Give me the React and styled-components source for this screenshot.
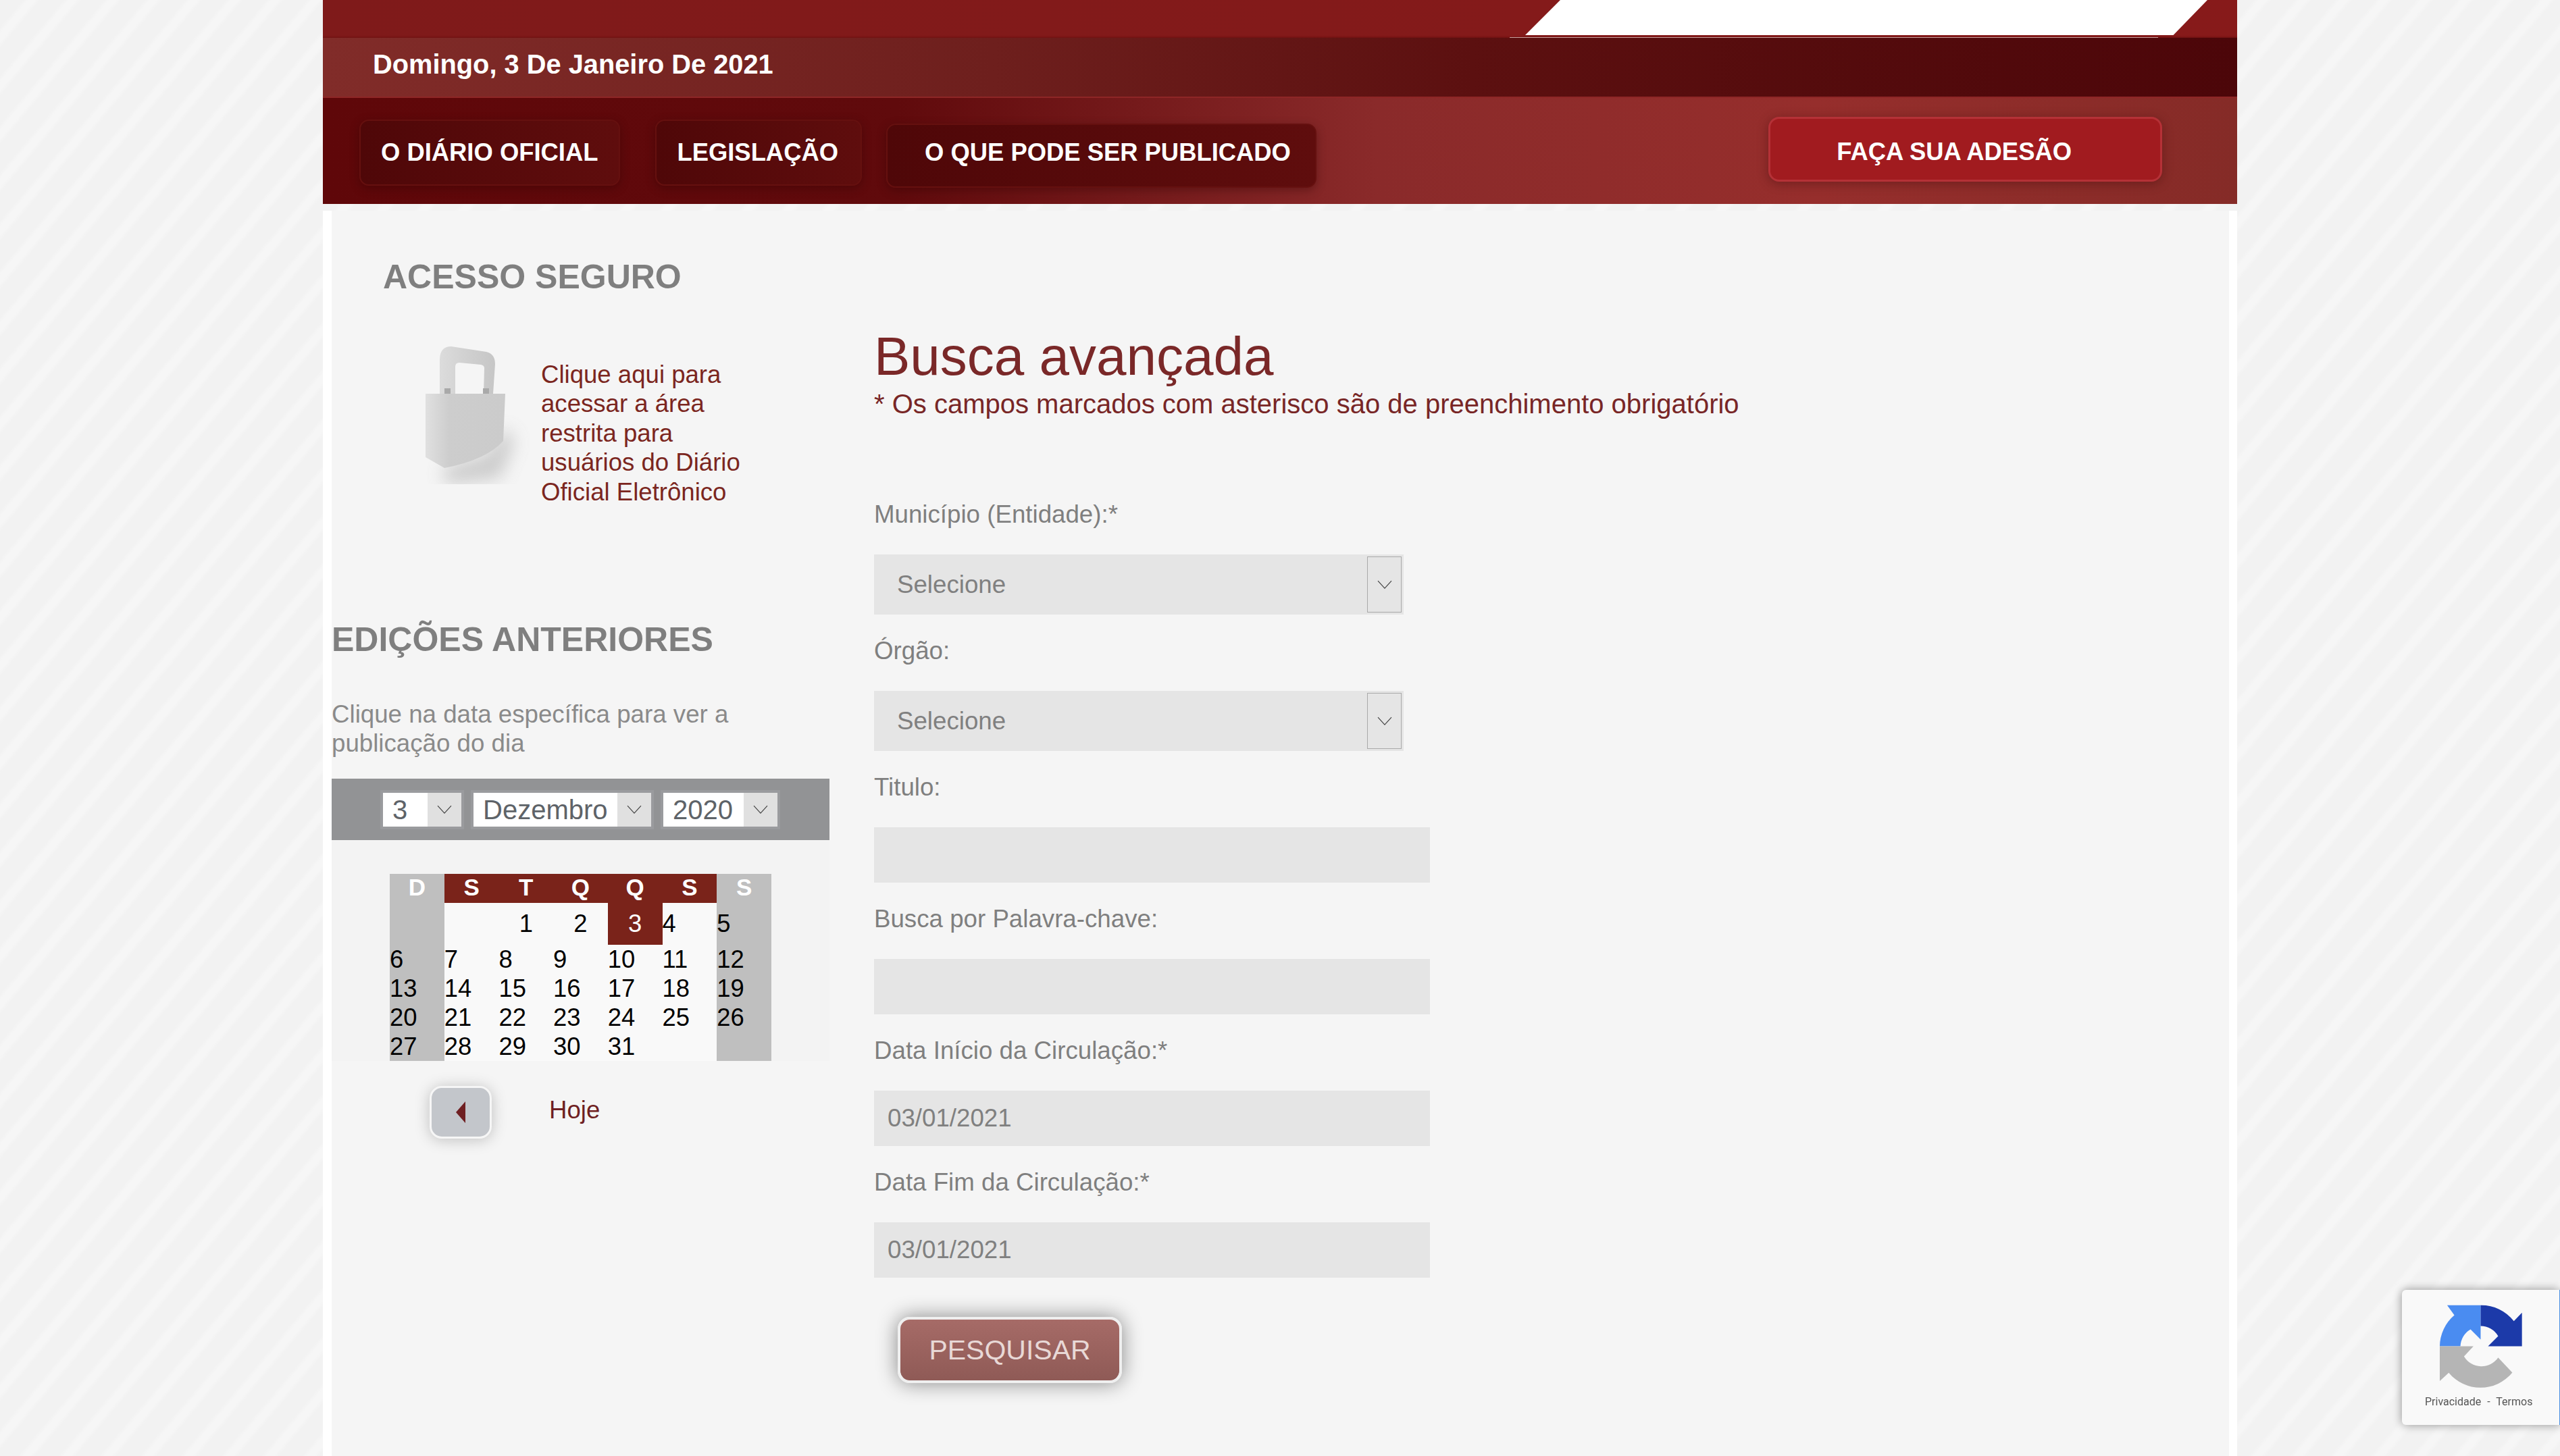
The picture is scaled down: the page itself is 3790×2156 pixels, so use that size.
import React from 'react'
import styled, { createGlobalStyle } from 'styled-components'

const FONT = '"Liberation Sans", Arial, sans-serif'

const WEEKS = [
  ['', '', 1, 2, 3, 4, 5],
  [6, 7, 8, 9, 10, 11, 12],
  [13, 14, 15, 16, 17, 18, 19],
  [20, 21, 22, 23, 24, 25, 26],
  [27, 28, 29, 30, 31, '', ''],
]
const WEEK_DAYS = ['D', 'S', 'T', 'Q', 'Q', 'S', 'S']

const GlobalStyle = createGlobalStyle`
  html, body {
    margin: 0;
    height: 2156px;
    overflow: hidden;
  }

  body {
    font-family: ${FONT};
    background-color: #f2f2f2;
    background-image: repeating-linear-gradient(
      130deg,
      #f2f2f2 0,
      #f2f2f2 26px,
      #f6f6f6 32px,
      #f6f6f6 40px,
      #f2f2f2 46px
    );
  }
`

const Page = styled.div`
  width: 2834px;
  height: 2156px;
  margin: 0 auto;
  display: flex;
  flex-direction: column;
`

const TopBar = styled.div`
  height: 56px;
  display: flex;
  flex-direction: column;
  align-items: flex-end;
  background: linear-gradient(90deg, #7f1a1a, #871a1a);
  box-shadow: inset 0 -3px 3px -2px #6b1010;
`

const LogoSlot = styled.div`
  width: 1010px;
  height: 52px;
  margin-right: 44px;
  background: #fff;
  clip-path: polygon(52px 0, 100% 0, 95% 100%, 0 100%);
`

const LogoRule = styled.div`
  width: 960px;
  height: 1px;
  margin: 3px 117px 0 0;
  background: #c9a3a0;
`

const DateBar = styled.div`
  height: 87px;
  display: flex;
  align-items: center;
  box-sizing: border-box;
  padding: 0 0 8px 74px;
  color: #fff;
  font-size: 39.8px;
  font-weight: 700;
  background: linear-gradient(90deg, #812c29 0%, #6e1f1d 35%, #5c1010 60%, #4c0609 100%);
`

const NavBar = styled.nav`
  height: 159px;
  display: flex;
  align-items: flex-start;
  padding-left: 54px;
  box-sizing: border-box;
  border-top: 2px solid #8e2626;
  background: linear-gradient(90deg, #5f0709 0%, #600a0c 30%, #8a2a2a 55%, #962e2c 78%, #852b27 100%);
`

const NavButton = styled.a`
  height: ${(p) => p.$height}px;
  margin-top: ${(p) => p.$top}px;
  margin-left: ${(p) => p.$gap}px;
  padding: 0 ${(p) => p.$right}px ${(p) => p.$bottom || 0}px ${(p) => p.$left}px;
  display: flex;
  align-items: center;
  box-sizing: border-box;
  border-radius: 14px;
  color: #fff;
  font-size: 36.4px;
  font-weight: 700;
  white-space: nowrap;
  background: linear-gradient(90deg, #4f0708, #5f0d0d);
  border: 2px solid #65100f;
  box-shadow: 0 4px 14px rgba(40, 0, 0, 0.35);
`

const JoinButton = styled.a`
  height: 96px;
  margin: 28px 111px 0 auto;
  padding: 8px 131px 0 98px;
  display: flex;
  align-items: center;
  box-sizing: border-box;
  border-radius: 16px;
  color: #fff;
  font-size: 36.4px;
  font-weight: 700;
  background: #a11b1f;
  border: 3px solid #b53137;
  box-shadow: 0 3px 16px rgba(60, 10, 10, 0.4);
`

const Panel = styled.main`
  flex: 1;
  margin-top: 10px;
  display: flex;
  background: #f5f5f5;
  border-left: 13px solid #fff;
  border-right: 12px solid #fff;
`

const Sidebar = styled.aside`
  width: 737px;
  flex-shrink: 0;
`

const SideTitle = styled.h2`
  margin: ${(p) => p.$top}px 0 0 ${(p) => p.$left}px;
  color: #7f7f7f;
  font-size: 50px;
  font-weight: 700;
  line-height: 60px;
`

const SecureBox = styled.div`
  display: flex;
  margin: 63px 0 0 79px;
`

const LockArt = styled.svg`
  width: 231px;
  height: 214px;
  flex-shrink: 0;
`

const SecureText = styled.a`
  width: 320px;
  margin-top: 30px;
  color: #7b2620;
  font-size: 36.6px;
  line-height: 43.4px;
`

const SideText = styled.p`
  width: 640px;
  margin: 59px 0 31px;
  color: #8a8a8a;
  font-size: 36.7px;
  line-height: 43px;
`

const MonthBar = styled.div`
  height: 91px;
  display: flex;
  align-items: center;
  gap: 10px;
  padding-left: 72px;
  background: #929395;
`

const MiniSelect = styled.div`
  width: ${(p) => p.$width}px;
  height: 58px;
  display: flex;
  box-sizing: border-box;
  border: 4px solid #9a9b9e;
  background: #fff;
  color: #5e6368;
  font-size: 40px;
  line-height: 50px;
`

const MiniValue = styled.span`
  flex: 1;
  padding-left: 14px;
`

const MiniArrow = styled.span`
  width: 50px;
  display: flex;
  align-items: center;
  justify-content: center;
  background: #e0e0e0;
  border-left: 1px solid #fff;
`

const CalendarBox = styled.div`
  padding: 50px 0 0 86px;
  background: #f3f3f3;
`

const Calendar = styled.table`
  width: 565px;
  table-layout: fixed;
  border-collapse: collapse;
  font-size: 36.4px;
`

const HeadCell = styled.th`
  height: 43px;
  padding: 0 0 4px;
  box-sizing: border-box;
  color: #fff;
  font-size: 35px;
  font-weight: 700;
  line-height: 36px;
  background: ${(p) => (p.$weekend ? '#bfbfbf' : '#7a231a')};
`

const DayCell = styled.td`
  height: ${(p) => (p.$first ? 62 : 43)}px;
  padding: 0;
  line-height: 36px;
  text-align: ${(p) => (p.$center ? 'center' : 'left')};
  color: ${(p) => (p.$selected ? '#fff' : '#000')};
  background: ${(p) => (p.$selected ? '#7a231a' : p.$weekend ? '#bfbfbf' : '#f9f9f9')};
`

const CalendarNav = styled.div`
  display: flex;
  align-items: center;
  margin: 37px 0 0 145px;
  gap: 85px;
`

const BackButton = styled.button`
  width: 92px;
  height: 78px;
  padding: 0;
  display: flex;
  align-items: center;
  justify-content: center;
  box-sizing: border-box;
  border-radius: 18px;
  border: 3px solid #f6f6f6;
  background: #c3c6cb;
  box-shadow: 0 2px 22px rgba(0, 0, 0, 0.22);
`

const TodayLink = styled.a`
  margin-bottom: 6px;
  color: #6f1f22;
  font-size: 36.6px;
`

const FormColumn = styled.section`
  padding: 168px 0 0 66px;
`

const PageTitle = styled.h1`
  margin: 0;
  color: #7a2828;
  font-size: 80px;
  font-weight: 400;
  line-height: 96px;
`

const Note = styled.p`
  margin: 0 0 120px;
  color: #782626;
  font-size: 40px;
  line-height: 44px;
`

const Field = styled.div`
  margin-bottom: 32px;
`

const Label = styled.label`
  display: block;
  margin-bottom: 37px;
  color: #7f7f7f;
  font-size: 36.7px;
  line-height: 44px;
`

const SelectBox = styled.div`
  width: 784px;
  height: 89px;
  display: flex;
  align-items: center;
  box-sizing: border-box;
  padding: 3px 3px 3px 34px;
  background: #e5e5e5;
  color: #808080;
  font-size: 36.7px;
`

const SelectText = styled.span`
  flex: 1;
`

const SelectArrow = styled.span`
  width: 51px;
  height: 100%;
  display: flex;
  align-items: center;
  justify-content: center;
  box-sizing: border-box;
  border: 1px solid #a9a9a9;
`

const TextInput = styled.input`
  display: block;
  width: 823px;
  height: 82px;
  padding: 0 20px;
  box-sizing: border-box;
  border: 0;
  outline: 0;
  background: #e5e5e5;
  color: #808080;
  font-family: ${FONT};
  font-size: 36.7px;
`

const SearchButton = styled.button`
  display: block;
  width: 332px;
  height: 98px;
  margin: 58px 0 0 35px;
  padding: 0;
  box-sizing: border-box;
  border: 4px solid #efefef;
  border-radius: 18px;
  background: linear-gradient(180deg, #a66b67, #8f5a56);
  color: #e8d8d6;
  font-family: ${FONT};
  font-size: 41px;
  box-shadow: 0 0 30px rgba(0, 0, 0, 0.45);
`

const Recaptcha = styled.div`
  position: fixed;
  right: 0;
  bottom: 46px;
  width: 234px;
  height: 200px;
  display: flex;
  flex-direction: column;
  align-items: flex-start;
  box-sizing: border-box;
  padding: 17px 0 0 44px;
  border-radius: 6px 0 0 6px;
  border-right: 1px solid #4a90e2;
  background: #f9f9f9;
  box-shadow: 0 0 14px rgba(0, 0, 0, 0.4);
`

const RecaptchaLinks = styled.div`
  margin: 6px 0 0 -10px;
  color: #555;
  font-family: Roboto, sans-serif;
  font-size: 16px;
  word-spacing: 5px;
  white-space: nowrap;
`

const Chevron = ({ size = 22 }) => (
  <svg width={size} height={size * 0.6} viewBox="0 0 22 13" fill="none" stroke="#444" strokeWidth="1.2">
    <path d="M1 1l10 11L21 1" />
  </svg>
)

const LockIcon = () => (
  <LockArt viewBox="0 0 231 214">
    <defs>
      <filter id="lockBlur" x="-50%" y="-50%" width="200%" height="200%">
        <feGaussianBlur stdDeviation="13" />
      </filter>
      <linearGradient id="lockBody" x1="0" x2="1" y1="0" y2="0">
        <stop offset="0" stopColor="#e0e0e0" />
        <stop offset="0.3" stopColor="#cdcdcd" />
        <stop offset="1" stopColor="#cbcbcb" />
      </linearGradient>
      <linearGradient id="lockBow" x1="0" x2="1" y1="0" y2="0">
        <stop offset="0" stopColor="#dcdcdc" />
        <stop offset="0.5" stopColor="#d0d0d0" />
        <stop offset="1" stopColor="#c6c6c6" />
      </linearGradient>
    </defs>
    <path d="M85 190L150 170L178 130L192 150L170 205L90 214Z" fill="#8d8d8d" opacity="0.4" filter="url(#lockBlur)" />
    <path
      d="M81 80V30Q81 10 98 10L150 18Q163 21 163 36L160 80H146L147 42Q147 38 142 37L110 34Q104 34 104 40V80Z"
      fill="url(#lockBow)"
    />
    <path d="M88 72h9v8h-9zM145 72h9v8h-9z" fill="#a9a9a9" />
    <path d="M60 80H178L175 150Q150 178 88 190L60 174Z" fill="url(#lockBody)" />
  </LockArt>
)

const RecaptchaLogo = () => (
  <svg width="147" height="133" viewBox="900 200 440 400">
    <path d="M935 400A183 183 0 0 1 1000 262L968 217H1117V370L1072 325A90 90 0 0 0 1027 400Z" fill="#4a8cf1" />
    <path d="M1117 217A183 183 0 0 1 1265 288L1301 250V400H1150L1195 355A90 90 0 0 0 1117 310Z" fill="#1c3aa9" />
    <path d="M935 400H1085L1043 445A90 90 0 0 0 1195 450L1258 517A183 183 0 0 1 975 518L935 555Z" fill="#b5b5b5" />
  </svg>
)

const MiniField = ({ width, value }) => (
  <MiniSelect $width={width}>
    <MiniValue>{value}</MiniValue>
    <MiniArrow>
      <Chevron />
    </MiniArrow>
  </MiniSelect>
)

const SelectField = ({ label }) => (
  <Field>
    <Label>{label}</Label>
    <SelectBox>
      <SelectText>Selecione</SelectText>
      <SelectArrow>
        <Chevron />
      </SelectArrow>
    </SelectBox>
  </Field>
)

const InputField = ({ label, value = '' }) => (
  <Field>
    <Label>{label}</Label>
    <TextInput readOnly value={value} />
  </Field>
)

export default function App() {
  return (
    <Page>
      <GlobalStyle />
      <header>
        <TopBar>
          <LogoSlot />
          <LogoRule />
        </TopBar>
        <DateBar>Domingo, 3 De Janeiro De 2021</DateBar>
        <NavBar>
          <NavButton $top={32} $gap={0} $height={98} $left={30} $right={31}>
            O DIÁRIO OFICIAL
          </NavButton>
          <NavButton $top={32} $gap={52} $height={98} $left={30} $right={33}>
            LEGISLAÇÃO
          </NavButton>
          <NavButton $top={38} $gap={36} $height={95} $left={55} $right={36} $bottom={10}>
            O QUE PODE SER PUBLICADO
          </NavButton>
          <JoinButton>FAÇA SUA ADESÃO</JoinButton>
        </NavBar>
      </header>
      <Panel>
        <Sidebar>
          <SideTitle $top={68} $left={76}>
            ACESSO SEGURO
          </SideTitle>
          <SecureBox>
            <LockIcon />
            <SecureText>Clique aqui para acessar a área restrita para usuários do Diário Oficial Eletrônico</SecureText>
          </SecureBox>
          <SideTitle $top={167} $left={0}>
            EDIÇÕES ANTERIORES
          </SideTitle>
          <SideText>Clique na data específica para ver a publicação do dia</SideText>
          <MonthBar>
            <MiniField width={124} value="3" />
            <MiniField width={271} value="Dezembro" />
            <MiniField width={177} value="2020" />
          </MonthBar>
          <CalendarBox>
            <Calendar>
              <thead>
                <tr>
                  {WEEK_DAYS.map((day, i) => (
                    <HeadCell key={i} $weekend={i === 0 || i === 6}>
                      {day}
                    </HeadCell>
                  ))}
                </tr>
              </thead>
              <tbody>
                {WEEKS.map((week, w) => (
                  <tr key={w}>
                    {week.map((day, d) => (
                      <DayCell
                        key={d}
                        $first={w === 0}
                        $center={w === 0 && d < 5}
                        $weekend={d === 0 || d === 6}
                        $selected={day === 3}
                      >
                        {day}
                      </DayCell>
                    ))}
                  </tr>
                ))}
              </tbody>
            </Calendar>
          </CalendarBox>
          <CalendarNav>
            <BackButton aria-label="Mês anterior">
              <svg width="16" height="34" viewBox="0 0 16 34">
                <path d="M15 1V33L1 17Z" fill="#6f1f22" />
              </svg>
            </BackButton>
            <TodayLink>Hoje</TodayLink>
          </CalendarNav>
        </Sidebar>
        <FormColumn>
          <PageTitle>Busca avançada</PageTitle>
          <Note>* Os campos marcados com asterisco são de preenchimento obrigatório</Note>
          <SelectField label="Município (Entidade):*" />
          <SelectField label="Órgão:" />
          <InputField label="Titulo:" />
          <InputField label="Busca por Palavra-chave:" />
          <InputField label="Data Início da Circulação:*" value="03/01/2021" />
          <InputField label="Data Fim da Circulação:*" value="03/01/2021" />
          <SearchButton>PESQUISAR</SearchButton>
        </FormColumn>
      </Panel>
      <Recaptcha>
        <RecaptchaLogo />
        <RecaptchaLinks>Privacidade - Termos</RecaptchaLinks>
      </Recaptcha>
    </Page>
  )
}
